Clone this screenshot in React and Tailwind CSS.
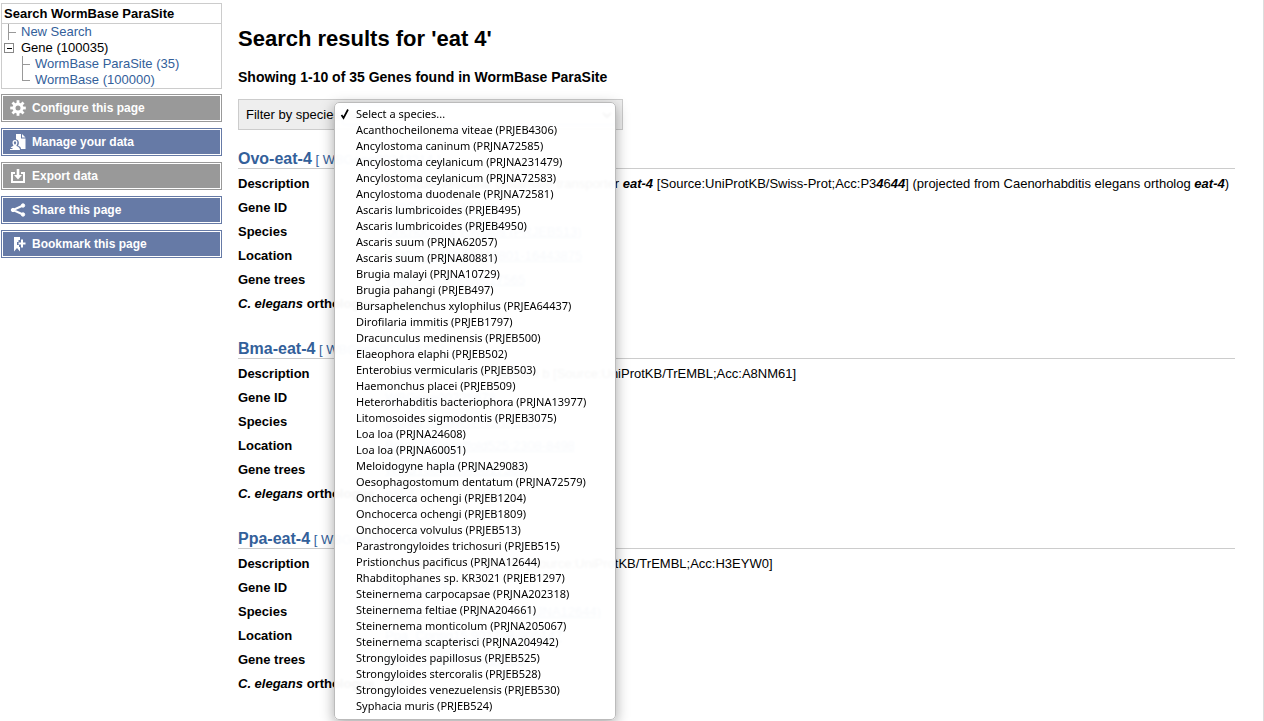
import React from "react";

const SPECIES = [
  "Select a species...",
  "Acanthocheilonema viteae (PRJEB4306)",
  "Ancylostoma caninum (PRJNA72585)",
  "Ancylostoma ceylanicum (PRJNA231479)",
  "Ancylostoma ceylanicum (PRJNA72583)",
  "Ancylostoma duodenale (PRJNA72581)",
  "Ascaris lumbricoides (PRJEB495)",
  "Ascaris lumbricoides (PRJEB4950)",
  "Ascaris suum (PRJNA62057)",
  "Ascaris suum (PRJNA80881)",
  "Brugia malayi (PRJNA10729)",
  "Brugia pahangi (PRJEB497)",
  "Bursaphelenchus xylophilus (PRJEA64437)",
  "Dirofilaria immitis (PRJEB1797)",
  "Dracunculus medinensis (PRJEB500)",
  "Elaeophora elaphi (PRJEB502)",
  "Enterobius vermicularis (PRJEB503)",
  "Haemonchus placei (PRJEB509)",
  "Heterorhabditis bacteriophora (PRJNA13977)",
  "Litomosoides sigmodontis (PRJEB3075)",
  "Loa loa (PRJNA24608)",
  "Loa loa (PRJNA60051)",
  "Meloidogyne hapla (PRJNA29083)",
  "Oesophagostomum dentatum (PRJNA72579)",
  "Onchocerca ochengi (PRJEB1204)",
  "Onchocerca ochengi (PRJEB1809)",
  "Onchocerca volvulus (PRJEB513)",
  "Parastrongyloides trichosuri (PRJEB515)",
  "Pristionchus pacificus (PRJNA12644)",
  "Rhabditophanes sp. KR3021 (PRJEB1297)",
  "Steinernema carpocapsae (PRJNA202318)",
  "Steinernema feltiae (PRJNA204661)",
  "Steinernema monticolum (PRJNA205067)",
  "Steinernema scapterisci (PRJNA204942)",
  "Strongyloides papillosus (PRJEB525)",
  "Strongyloides stercoralis (PRJEB528)",
  "Strongyloides venezuelensis (PRJEB530)",
  "Syphacia muris (PRJEB524)",
];

const Hit = ({ children }) => <em className="font-bold italic">{children}</em>;

const RESULTS = [
  {
    name: "Ovo-eat-4",
    id: "WBGene00243214",
    description: (
      <>
        Probable vesicular glutamate transporter <Hit>eat-4</Hit> [Source:UniProtKB/Swiss-Prot;Acc:P3<Hit>4</Hit>6<Hit>44</Hit>]
        (projected from Caenorhabditis elegans ortholog <Hit>eat-4</Hit>)
      </>
    ),
    species: "Onchocerca volvulus (PRJEB513)",
    location: "OVOC_OM2:16439801-16443875",
    trees: "WBGT00000000017565",
  },
  {
    name: "Bma-eat-4",
    id: "WBGene00225678",
    description: "Protein Bm-EAT-4, isoform b [Source:UniProtKB/TrEMBL;Acc:A8NM61]",
    species: "Brugia malayi (PRJNA10729)",
    location: "Bmal_v3_scaffold525:2308-8498",
    trees: "WBGT00000000017565",
  },
  {
    name: "Ppa-eat-4",
    id: "WBGene00117652",
    description: "Uncharacterized protein [Source:UniProtKB/TrEMBL;Acc:H3EYW0]",
    species: "Pristionchus pacificus (PRJNA12644)",
    location: "Ppa_Contig15:901708-905147",
    trees: "WBGT00000000017565",
  },
];

const GearIcon = () => (
  <svg viewBox="0 0 16 16" className="size-4" fill="none" stroke="white">
    <circle cx="8" cy="8" r="4" strokeWidth="3" />
    {[0, 45, 90, 135, 180, 225, 270, 315].map((a) => (
      <path key={a} d="M8 3V0.2" strokeWidth="2.8" transform={`rotate(${a} 8 8)`} />
    ))}
  </svg>
);

const DataIcon = () => (
  <svg viewBox="0 0 16 16" className="size-4" fill="white">
    <path d="M6 0h5v4.500h4.500V15H11c0-2-1.500-2.700-3-3.300 1.400-1.500 1.500-5.700-2-6.400z" />
    <path d="M12 0l3.500 3.500H12z" />
    <path d="M5 6c1.700 0 2.600 1.200 2.400 3-.1 1-.5 1.700-.9 2.200v.9c1.500.8 3.300 1.100 3.500 3.900H0v-1h2.500v-1H.7c.3-1 1.600-1.500 2.600-1.900v-.9C2.700 10.500 2.500 9.700 2.500 9c-.1-1.800.9-3 2.500-3z" />
    <path d="M5 7.300c.8 0 1.200.7 1.100 1.700-.1.800-.6 1.500-1.100 1.500S4 9.800 3.900 9c-.1-1 .3-1.700 1.100-1.700z" fill="#667aa6" />
  </svg>
);

const ExportIcon = () => (
  <svg viewBox="0 0 16 16" className="size-4" fill="white">
    <path d="M1 4h4v2H3v7h10V6h-2V4h4v11H1z" />
    <path d="M6.700 1h2.600v6H12l-4 4.500L4 7h2.700z" />
  </svg>
);

const ShareIcon = () => (
  <svg viewBox="0 0 16 16" className="size-4" fill="white" stroke="white">
    <path d="M13 3.500L3 8l10 4.500" fill="none" strokeWidth="2" />
    <circle cx="13" cy="3.500" r="1.700" />
    <circle cx="3" cy="8" r="1.700" />
    <circle cx="13" cy="12.500" r="1.700" />
  </svg>
);

const BookmarkIcon = () => (
  <svg viewBox="0 0 16 16" className="size-4" fill="white">
    <path d="M4 1h6v3H8.500v2H7v3h2v2h1v4.500L7 12l-3 3.500z" />
    <path d="M11 3.500h2v3h2.500v2H13v3h-2v-3H8.500v-2H11z" />
  </svg>
);

const TOOLS = [
  { label: "Configure this page", Icon: GearIcon, disabled: true },
  { label: "Manage your data", Icon: DataIcon },
  { label: "Export data", Icon: ExportIcon, disabled: true },
  { label: "Share this page", Icon: ShareIcon },
  { label: "Bookmark this page", Icon: BookmarkIcon },
];

const Branch = ({ last }) => (
  <svg viewBox="0 0 8 16" className="h-4 w-2 shrink-0" stroke="#999" fill="none" shapeRendering="crispEdges">
    <path d={last ? "M0.500 0V8.500H8" : "M0.500 0V16M0 8.500H8"} />
  </svg>
);

function Sidebar() {
  return (
    <aside className="w-[222px] shrink-0 pt-[3px] pl-px">
      <nav className="border border-[#ccc] text-[13px] leading-4">
        <h2 className="border-b border-[#ccc] pl-[2px] text-[13px] leading-[19px] font-bold">Search WormBase ParaSite</h2>
        <ul className="text-[#33609a]">
          <li className="flex gap-[5px] pl-[6px]">
            <Branch />
            <a href="#new">New Search</a>
          </li>
          <li>
            <div className="flex items-center gap-[7px] pl-[2px] text-black">
              <button aria-label="Collapse Gene" className="flex size-[10px] items-center justify-center border border-[#888] bg-white">
                <span className="h-px w-[5px] bg-black" />
              </button>
              Gene (100035)
            </div>
            <ul>
              <li className="flex gap-[5px] pl-[20px]">
                <Branch />
                <a href="#parasite">WormBase ParaSite (35)</a>
              </li>
              <li className="flex gap-[5px] pl-[20px]">
                <Branch last />
                <a href="#wormbase">WormBase (100000)</a>
              </li>
            </ul>
          </li>
        </ul>
      </nav>
      <div className="mt-[5px] flex flex-col gap-[6px]">
        {TOOLS.map(({ label, Icon, disabled }) => (
          <button
            key={label}
            className={
              "flex h-7 items-center gap-[6px] border pl-2 text-left text-xs font-bold text-white shadow-[inset_0_0_0_1px_white] " +
              (disabled ? "border-[#999] bg-[#999]" : "border-[#667aa6] bg-[#667aa6]")
            }
          >
            <Icon />
            {label}
          </button>
        ))}
      </div>
    </aside>
  );
}

const Row = ({ label, children }) => (
  <div className="flex">
    <dt className="w-[147px] shrink-0 font-bold whitespace-nowrap">{label}</dt>
    <dd className="whitespace-nowrap">{children}</dd>
  </div>
);

const Link = ({ children }) => (
  <a href="#record" className="text-[#33609a] underline">
    {children}
  </a>
);

function Result({ r }) {
  return (
    <article className="mb-[23px]">
      <h3 className="h-5 border-b border-[#ccc] text-[13px] leading-[19px] text-[#33609a]">
        <a href="#gene" className="text-base leading-[19px] font-bold">{r.name}</a> [ {r.id} ]
      </h3>
      <dl className="pt-[3px] leading-6">
        <Row label="Description">{r.description}</Row>
        <Row label="Gene ID">
          <Link>{r.id}</Link>
        </Row>
        <Row label="Species">
          <Link>{r.species}</Link>
        </Row>
        <Row label="Location">
          <Link>{r.location}</Link>
        </Row>
        <Row label="Gene trees">
          <Link>{r.trees}</Link>
        </Row>
        <Row label={<><i>C. elegans</i> orthologue</>}>
          <Link>eat-4</Link>
        </Row>
      </dl>
    </article>
  );
}

function SpeciesMenu() {
  return (
    <ul
      role="listbox"
      aria-label="Species"
      className="absolute top-[2px] left-[95px] z-10 w-[282px] rounded-[5px] border border-[#bbb] bg-white/96 pt-[3px] pb-[5px] font-['Noto_Sans','DejaVu_Sans',sans-serif] text-[11px] leading-4 shadow-[0_4px_14px_rgba(0,0,0,0.35)] backdrop-blur-[1px]"
    >
      {SPECIES.map((s, i) => (
        <li key={s} role="option" aria-selected={i === 0} className="flex pl-[5px]">
          <span className="w-4 shrink-0">
            {i === 0 && (
              <svg viewBox="0 0 10 12" className="mt-[2px] h-3 w-[10px]" fill="none" stroke="black" strokeWidth="1.7">
                <path d="M1.500 7l2 3L8 1.500" />
              </svg>
            )}
          </span>
          {s}
        </li>
      ))}
    </ul>
  );
}

export default function App() {
  return (
    <div className="flex h-screen overflow-hidden bg-white font-['Liberation_Sans',Arial,sans-serif] text-[13px] text-black">
      <Sidebar />
      <main className="min-w-0 grow border-r border-[#ddd] pr-7 pl-4">
        <h1 className="pt-[27px] text-[22px] leading-6 font-bold">Search results for 'eat 4'</h1>
        <h2 className="mt-[16px] text-sm leading-5 font-bold">Showing 1-10 of 35 Genes found in WormBase ParaSite</h2>
        <form className="relative mt-[12px] flex h-[31px] w-[385px] items-center border border-[#ccc] bg-[#eee] pr-[6px] pl-[7px]">
          <label htmlFor="species" className="w-[96px] shrink-0 whitespace-nowrap">Filter by species:</label>
          <select id="species" className="h-5 min-w-0 grow rounded border border-[#7aa7dc] bg-white text-[11px]">
            <option>Select a species...</option>
          </select>
          <SpeciesMenu />
        </form>
        <div className="mt-[19px]">
          {RESULTS.map((r) => (
            <Result key={r.name} r={r} />
          ))}
        </div>
      </main>
    </div>
  );
}
